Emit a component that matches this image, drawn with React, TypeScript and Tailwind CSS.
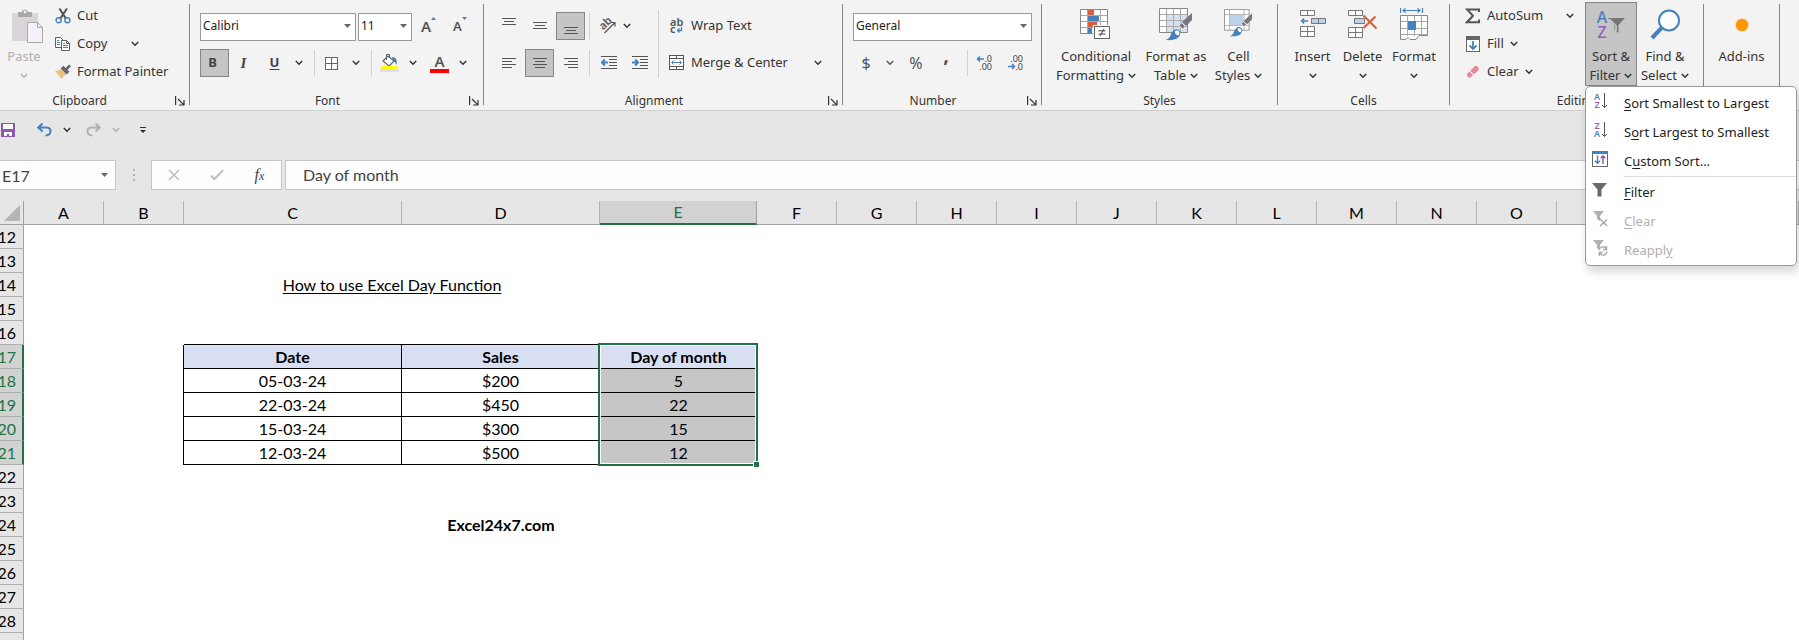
import React, { useState } from 'react';
import clsx from 'clsx';

interface Row {
  date: string;
  sales: string;
  day: string;
}

const COLUMNS = ['A', 'B', 'C', 'D', 'E', 'F', 'G', 'H', 'I', 'J', 'K', 'L', 'M', 'N', 'O', 'P', 'Q', 'R'];
const ROW_NUMBERS = Array.from({ length: 18 }, (_, i) => i + 12);

const TABLE_ROWS: Record<number, Row> = {
  18: { date: '05-03-24', sales: '$200', day: '5' },
  19: { date: '22-03-24', sales: '$450', day: '22' },
  20: { date: '15-03-24', sales: '$300', day: '15' },
  21: { date: '12-03-24', sales: '$500', day: '12' },
};

/* ---------- small shared pieces ---------- */

const Chevron: React.FC<{ className?: string }> = ({ className }) => (
  <svg width="8" height="6" viewBox="0 0 8 6" className={clsx('inline-block shrink-0', className)} fill="none" stroke="currentColor" strokeWidth="1.5">
    <path d="M0.8 1 L4 4.2 L7.2 1" />
  </svg>
);

const ChevronButton: React.FC<{ label: string; className?: string }> = ({ label, className }) => (
  <button aria-label={label} className={clsx('flex h-7 w-4 shrink-0 items-center justify-center', className)}>
    <Chevron />
  </button>
);

const Arrow: React.FC<{ className?: string }> = ({ className }) => (
  <svg width="7" height="4" viewBox="0 0 7 4" className={clsx('pointer-events-none', className)} fill="#666">
    <path d="M0 0H7L3.5 4Z" />
  </svg>
);

const Separator = () => <div className="mt-1 mb-[5px] w-px shrink-0 bg-[#868686]" />;

const Divider: React.FC<{ className?: string }> = ({ className }) => (
  <div className={clsx('w-px shrink-0 bg-[#cfcfcf]', className)} />
);

const Group: React.FC<{ label: string; className: string; launcher?: boolean; labelClass?: string; children: React.ReactNode }> = ({
  label,
  className,
  launcher,
  labelClass,
  children,
}) => (
  <section aria-label={label} className={clsx('flex shrink-0 flex-col pt-0.5', className)}>
    <div className="flex h-[84px]">{children}</div>
    <div className="flex flex-1 items-center pt-1.5 text-xs">
      <span className={clsx('flex-1 text-center', labelClass)}>{label}</span>
      {launcher && (
        <button aria-label={`${label} settings`} className="flex w-[18px] justify-center">
          <svg width="10" height="10" viewBox="0 0 10 10" fill="none" stroke="#333" strokeWidth="1.2">
            <path d="M0.6 0V9M3 3L8.6 8.6M9 4V9H4" />
          </svg>
        </button>
      )}
    </div>
  </section>
);

const ToolButton: React.FC<{ label: string; active?: boolean; children: React.ReactNode }> = ({ label, active, children }) => (
  <button
    aria-label={label}
    aria-pressed={!!active}
    className={clsx(
      'flex h-7 w-[29px] shrink-0 items-center justify-center border',
      active ? 'border-[#868686] bg-[#c5c5c5]' : 'border-transparent'
    )}
  >
    {children}
  </button>
);

const BigButton: React.FC<{ icon: React.ReactNode; lines: string[]; chevron?: boolean; className?: string }> = ({ icon, lines, chevron, className }) => (
  <button className={clsx('flex h-[84px] shrink-0 flex-col items-center text-[13px] leading-[19px]', className)}>
    <span className="flex h-[45px] shrink-0 items-center">{icon}</span>
    <span className="whitespace-nowrap">{lines[0]}</span>
    {chevron && (
      <span className="flex h-[19px] items-center gap-1 whitespace-nowrap">
        {lines[1]}
        <Chevron />
      </span>
    )}
  </button>
);

/* ---------- icons ---------- */

const PasteIcon = () => (
  <svg width="32" height="36" viewBox="0 0 32 36">
    <rect x="0" y="4" width="26" height="28" rx="1" fill="#d9d5d9" />
    <path d="M6 3H10C10 -0.5 16 -0.5 16 3H20V8H6Z" fill="#a9a9a9" />
    <circle cx="13" cy="3" r="1.4" fill="#f3f3f3" />
    <path d="M15.5 13.5H25.5L30.5 18.5V33.5H15.5Z" fill="#f6f1f8" stroke="#a9a9a9" />
    <path d="M25.5 13.5V18.5H30.5" fill="none" stroke="#a9a9a9" />
  </svg>
);

const CutIcon = () => (
  <svg width="16" height="16" viewBox="0 0 16 16" fill="none">
    <path d="M4.4 0.5L10.8 10.4M12 0.5L5.4 10.4" stroke="#555" strokeWidth="2" />
    <circle cx="3.6" cy="12.2" r="2.5" stroke="#4680bd" strokeWidth="1.4" />
    <circle cx="12.4" cy="12.2" r="2.5" stroke="#4680bd" strokeWidth="1.4" />
  </svg>
);

const CopyIcon = () => (
  <svg width="16" height="16" viewBox="0 0 16 16" fill="#fff" stroke="#606060">
    <path d="M0.5 1.5H5.5L8.5 4.5V11.5H0.5Z" />
    <path d="M6.5 4.5H11.5L14.5 7.5V14.5H6.5Z" />
    <path d="M11.5 4.5V7.5H14.5" fill="none" />
    <path d="M2 4.5H4M2 6.5H5M2 8.5H5M8 9.5H13M8 11.5H13M8 7.5H10" stroke="#4680bd" />
  </svg>
);

const PainterIcon = () => (
  <svg width="16" height="16" viewBox="0 0 16 16">
    <path d="M0 7L6.5 5.5L11 10L6.5 15Z" fill="#eac282" />
    <path d="M5.6 4.6L8.4 1.8L10.6 4L14 0.4L16 2.2L12.6 5.8L14.4 7.8L11.6 10.4Z" fill="#666" />
  </svg>
);

const BordersIcon = () => (
  <svg width="13" height="13" viewBox="0 0 13 13" fill="#fff" stroke="#666" shapeRendering="crispEdges">
    <rect x="0.5" y="0.5" width="12" height="12" />
    <path d="M6.5 1V12M1 6.5H12" />
  </svg>
);

const FillColorIcon = () => (
  <svg width="20" height="20" viewBox="0 0 20 20">
    <path d="M9 3L15 8L10 13L4 8Z" fill="#fff" stroke="#666" strokeWidth="1.2" />
    <path d="M7.5 7V1.5H10.5V5" fill="none" stroke="#666" />
    <path d="M13 4C17 4 18.5 7 17.5 12C16.5 9.5 15.5 8.5 13.5 7Z" fill="#4680bd" />
    <rect x="2" y="13" width="16" height="3" fill="#ff0" />
    <rect x="1" y="16" width="19" height="3" fill="#d9dff0" />
  </svg>
);

// Horizontal text lines: every entry is [x1, x2, y]
const Lines: React.FC<{ lines: number[][] }> = ({ lines }) => (
  <svg width="16" height="16" viewBox="0 0 16 16" stroke="#555" shapeRendering="crispEdges">
    {lines.map(([x1, x2, y]) => (
      <path key={y} d={`M${x1} ${y + 0.5}H${x2}`} />
    ))}
  </svg>
);

const IndentIcon: React.FC<{ right?: boolean }> = ({ right }) => (
  <svg width="16" height="16" viewBox="0 0 16 16" fill="none">
    <path d="M0 1.5H16M8 4.5H16M8 7.5H16M8 10.5H16M0 13.5H16" stroke="#555" shapeRendering="crispEdges" />
    {right ? (
      <path d="M0 7.5H5M3.2 4.5L6 7.5L3.2 10.5" stroke="#4680bd" strokeWidth="2" />
    ) : (
      <path d="M7 7.5H2M3.8 4.5L1 7.5L3.8 10.5" stroke="#4680bd" strokeWidth="2" />
    )}
  </svg>
);

const OrientationIcon = () => (
  <svg width="18" height="18" viewBox="0 0 18 18" className="overflow-visible">
    <text x="2" y="12" fontSize="11" fontWeight="600" fill="#555" transform="rotate(-45 5 10)">
      ab
    </text>
    <path d="M5.5 16L15.5 6M12 5.5H16V9.5" fill="none" stroke="#555" strokeWidth="1.2" />
  </svg>
);

const WrapIcon = () => (
  <svg width="16" height="18" viewBox="0 0 16 18" className="overflow-visible">
    <text x="1" y="9" fontSize="11" fontWeight="600" fill="#555">ab</text>
    <text x="1" y="16" fontSize="11" fontWeight="600" fill="#555">c</text>
    <path d="M12.5 10V13.5H8.5M10.5 11.5L8.5 13.5L10.5 15.5" fill="none" stroke="#4680bd" strokeWidth="1.3" />
  </svg>
);

const MergeIcon = () => (
  <svg width="16" height="16" viewBox="0 0 16 16" fill="#fff" stroke="#555">
    <rect x="0.5" y="0.5" width="14" height="14" />
    <path d="M0.5 3.5H14.5M0.5 11.5H14.5M7.5 0.5V3.5M7.5 11.5V14.5" />
    <path d="M3 7.5H12M4.5 5.5L2.5 7.5L4.5 9.5M10.5 5.5L12.5 7.5L10.5 9.5" fill="none" stroke="#4680bd" />
  </svg>
);

const DecimalIcon: React.FC<{ less?: boolean }> = ({ less }) => (
  <svg width="16" height="16" viewBox="0 0 16 16" className="overflow-visible">
    <text x="15" y="7" fontSize="9" fill="#444" textAnchor="end">{less ? '.00' : '.0'}</text>
    <text x="15" y="15" fontSize="9" fill="#444" textAnchor="end">{less ? '.0' : '.00'}</text>
    {less ? (
      <path d="M0 11.5H6M4 9L6.5 11.5L4 14" fill="none" stroke="#4680bd" strokeWidth="1.5" />
    ) : (
      <path d="M7 4H1M3 1.5L0.5 4L3 6.5" fill="none" stroke="#4680bd" strokeWidth="1.5" />
    )}
  </svg>
);

const ConditionalIcon = () => (
  <svg width="32" height="32" viewBox="0 0 32 32">
    <path d="M0.5 0.5H27.5V24.5H0.5Z" fill="#fff" stroke="#888" />
    <path d="M7.5 1V24M20.5 1V24M1 6.5H27M1 12.5H27M1 18.5H27" stroke="#aaa" />
    <rect x="8" y="1" width="6" height="5" fill="#d9603f" />
    <rect x="8" y="7" width="11" height="5" fill="#4680bd" />
    <rect x="8" y="13" width="9" height="5" fill="#d9603f" />
    <rect x="8" y="19" width="4" height="5" fill="#4680bd" />
    <rect x="13" y="16" width="18" height="15" fill="#f3f3f3" />
    <rect x="14.5" y="17.5" width="15" height="12" fill="#fff" stroke="#666" />
    <path d="M18.5 21.8H25.5M18.5 25H25.5M24 20L20 27" stroke="#444" />
  </svg>
);

const Brush = () => (
  <>
    <path d="M33 5L33 12L27 18L23 14Z" fill="#777" />
    <path d="M22.5 14.5L26.5 18.5L23.5 21L20 17.5Z" fill="#777" stroke="#f3f3f3" />
    <path d="M6 32C12 31 11 26 14 23C18 19 23 23 21 27C19 32 12 32.5 6 32Z" fill="#4680bd" />
    <path d="M16 23C19 21.5 21.5 24 20 27C18 28 15.5 26 16 23Z" fill="#fff" />
  </>
);

const FormatTableIcon = () => (
  <svg width="34" height="33" viewBox="0 0 34 33">
    <path d="M0.5 0.5H28.5V24.5H0.5Z" fill="#fff" stroke="#888" />
    <rect x="8" y="7" width="20" height="17" fill="#d3e1ef" />
    <path d="M7.5 1V24M14.5 1V24M21.5 1V24M1 6.5H28M1 12.5H28M1 18.5H28" stroke="#aaa" />
    <Brush />
  </svg>
);

const CellStylesIcon = () => (
  <svg width="29" height="28" viewBox="0 0 34 33" className="mb-1">
    <path d="M0.5 0.5H29.5V25H0.5Z" fill="#fff" stroke="#888" />
    <path d="M6.5 1V25M23.5 1V25M1 6.5H29M1 19.5H29" stroke="#aaa" />
    <rect x="7" y="7" width="16" height="12" fill="#bcd1ea" />
    <Brush />
  </svg>
);

const InsertIcon = () => (
  <svg width="26" height="28" viewBox="0 0 26 28" className="mb-0.5" fill="#fff" stroke="#777">
    <path d="M0.5 0.5H14.5V5.5H0.5ZM7.5 0.5V5.5" />
    <path d="M11.5 8.5H25.5V13.5H11.5ZM18.5 8.5V13.5" fill="#bcd1ea" />
    <path d="M0.5 16.5H14.5V26.5H0.5ZM7.5 16.5V26.5M0.5 21.5H14.5" />
    <path d="M8 11H2M4.2 8.5L1.7 11L4.2 13.5" fill="none" stroke="#4680bd" strokeWidth="1.6" />
  </svg>
);

const DeleteIcon = () => (
  <svg width="29" height="28" viewBox="0 0 29 28" className="mb-0.5" fill="#fff" stroke="#777">
    <path d="M0.5 0.5H14.5V5.5H0.5ZM7.5 0.5V5.5" />
    <path d="M6.5 8.5H16.5V13.5H6.5Z" fill="#bcd1ea" />
    <path d="M0.5 17.5H14.5V27.5H0.5ZM7.5 17.5V27.5M0.5 22.5H14.5" />
    <path d="M15.5 5.5L28.5 18.5M27.5 6.5L15.5 18" stroke="#d9603f" strokeWidth="2.2" />
  </svg>
);

const FormatIcon = () => (
  <svg width="28" height="33" viewBox="0 0 28 33">
    <path d="M0.5 0V5M22.5 0V5M3 2.5H20M5.5 0.5L3 2.5L5.5 4.5M17.5 0.5L20 2.5L17.5 4.5" fill="none" stroke="#4680bd" strokeWidth="1.2" />
    <path d="M0.5 7.5H27.5V27.5H19L16 31.5H10L8 29.5L5 31.5H0.5Z" fill="#fff" stroke="#888" />
    <path d="M7.5 8V28M14.5 8V28M21.5 8V27M1 13.5H27M1 20.5H27M1 26.5H27" stroke="#aaa" />
    <rect x="8" y="13" width="8" height="9" fill="#4680bd" />
  </svg>
);

const SumIcon = () => (
  <svg width="15" height="16" viewBox="0 0 15 16" fill="none" stroke="#555" strokeWidth="2">
    <path d="M14 4V1.5H2L8 7.8L2 14.2H14V11.5" />
  </svg>
);

const FillIcon = () => (
  <svg width="14" height="16" viewBox="0 0 14 16">
    <rect x="0.5" y="0.5" width="13" height="15" fill="#fff" stroke="#666" />
    <rect x="0" y="0" width="14" height="4" fill="#666" />
    <path d="M7 5V13M3.5 9.5L7 13L10.5 9.5" fill="none" stroke="#4680bd" strokeWidth="1.8" />
  </svg>
);

const EraserIcon = () => (
  <svg width="14" height="14" viewBox="0 0 14 14">
    <path d="M8.5 1.5C9.5 0.5 10.5 0.5 11.5 1.5L12.5 3C13 4 13 4.5 12.3 5.3L8 9.5L4.2 5.7Z" fill="#e88a9c" />
    <path d="M3.4 6.6L7 10.2L4.5 12.5H2.5L1 10.8V9Z" fill="#e88a9c" />
  </svg>
);

const SortFilterIcon = () => (
  <svg width="30" height="30" viewBox="0 0 30 30" className="overflow-visible">
    <text x="6" y="13" fontSize="16" fontWeight="500" fill="#4680bd" textAnchor="middle">A</text>
    <text x="6" y="28" fontSize="16" fontWeight="500" fill="#9560b8" textAnchor="middle">Z</text>
    <path d="M12 8H29L22.5 15V23L18.5 20V15Z" fill="#777" />
    <path d="M13.5 9L20 15.5V21" fill="none" stroke="#fff" />
  </svg>
);

const FindIcon = () => (
  <svg width="31" height="32" viewBox="0 0 31 32">
    <path d="M11.5 19L2 29" stroke="#4680bd" strokeWidth="4" />
    <circle cx="19" cy="11.5" r="10" fill="#fdfdfd" stroke="#4680bd" strokeWidth="2" />
  </svg>
);

const SortIcon: React.FC<{ descending?: boolean }> = ({ descending }) => (
  <svg width="16" height="16" viewBox="0 0 16 16" className="overflow-visible">
    <text x="5" y="7" fontSize="9" fontWeight="600" textAnchor="middle" fill={descending ? '#9560b8' : '#4680bd'}>
      {descending ? 'Z' : 'A'}
    </text>
    <text x="5" y="15" fontSize="9" fontWeight="600" textAnchor="middle" fill={descending ? '#4680bd' : '#9560b8'}>
      {descending ? 'A' : 'Z'}
    </text>
    <path d="M12.5 0V14.5M10 12L12.5 14.5L15 12" fill="none" stroke="#555" />
  </svg>
);

const CustomSortIcon = () => (
  <svg width="16" height="16" viewBox="0 0 16 16" fill="none">
    <rect x="0.5" y="0.5" width="15" height="15" fill="#fff" stroke="#666" />
    <rect width="16" height="3" fill="#4680bd" />
    <path d="M5.5 4.5V12M3 9.8L5.5 12.3L8 9.8" stroke="#4680bd" strokeWidth="1.4" />
    <path d="M11 13V5M8.7 7.2L11 4.8L13.3 7.2" stroke="#8d56b2" strokeWidth="1.4" />
  </svg>
);

const FunnelIcon: React.FC<{ variant?: 'clear' | 'reapply' }> = ({ variant }) => (
  <svg width="16" height="16" viewBox="0 0 16 16" fill="none">
    {variant ? (
      <path d="M1 0H12L8 5V10L5 8V5Z" fill="#b0b0b0" />
    ) : (
      <path d="M0 1H15L9.5 7.5V14.5H5.5V7.5Z" fill="#6a6a6a" />
    )}
    {variant === 'clear' && <path d="M7 7L15 15M15 8.5L8 15" stroke="#a9a9a9" strokeWidth="1.5" />}
    {variant === 'reapply' && (
      <path d="M7 10A4 4 0 0 1 14.5 9M14.5 6V9.5H11M15 11.5A4 4 0 0 1 7.5 13M7.3 15.8V12.5H10.8" stroke="#a9a9a9" strokeWidth="1.4" />
    )}
  </svg>
);

/* ---------- ribbon ---------- */

const SortMenuItem: React.FC<{ icon: React.ReactNode; disabled?: boolean; children: React.ReactNode }> = ({ icon, disabled, children }) => (
  <button
    role="menuitem"
    disabled={disabled}
    className="flex h-[29px] w-full items-center gap-4 pl-[6px] text-[13px] text-[#222] hover:bg-[#e6e6e6] disabled:text-[#b0b0b0]"
  >
    <span className="w-4 shrink-0 pb-1.5">{icon}</span>
    <span className="whitespace-nowrap">{children}</span>
  </button>
);

const U: React.FC<{ children: string }> = ({ children }) => <span className="underline underline-offset-2">{children}</span>;

const SortMenu = () => (
  <div
    role="menu"
    className="absolute top-full left-0 z-20 w-[212px] rounded-[5px] border border-[#9a9a9a] bg-white pt-0.5 shadow-[2px_6px_10px_rgba(0,0,0,0.16)]"
  >
    <SortMenuItem icon={<SortIcon />}><U>S</U>ort Smallest to Largest</SortMenuItem>
    <SortMenuItem icon={<SortIcon descending />}>S<U>o</U>rt Largest to Smallest</SortMenuItem>
    <SortMenuItem icon={<CustomSortIcon />}>C<U>u</U>stom Sort...</SortMenuItem>
    <div className="mb-px ml-[38px] h-px bg-[#dedede]" />
    <SortMenuItem icon={<FunnelIcon />}><U>F</U>ilter</SortMenuItem>
    <SortMenuItem icon={<FunnelIcon variant="clear" />} disabled><U>C</U>lear</SortMenuItem>
    <SortMenuItem icon={<FunnelIcon variant="reapply" />} disabled>Reappl<U>y</U></SortMenuItem>
  </div>
);

const Combo: React.FC<{ label: string; options: string[]; className: string }> = ({ label, options, className }) => (
  <div className={clsx('relative h-7 shrink-0', className)}>
    <select aria-label={label} className="h-full w-full appearance-none border border-[#9a9a9a] bg-white pb-0.5 pl-[2px] text-xs text-[#222]">
      {options.map(o => (
        <option key={o}>{o}</option>
      ))}
    </select>
    <Arrow className="absolute top-3 right-[5px]" />
  </div>
);

const Ribbon: React.FC<{ menuOpen: boolean; onToggleMenu: () => void }> = ({ menuOpen, onToggleMenu }) => (
  <header className="flex h-[111px] shrink-0 border-b border-[#cfcfcf] bg-[#f3f3f3] text-[#333]">
    <Group label="Clipboard" className="w-[189px]" launcher labelClass="pr-3">
      <button disabled className="ml-2 flex w-8 flex-col items-center text-[13px] leading-[19px] text-[#b0b0b0]">
        <span className="flex h-[45px] shrink-0 items-center pt-1 pl-2"><PasteIcon /></span>
        <span>Paste</span>
        <span className="flex h-[19px] items-center"><Chevron /></span>
      </button>
      <div className="ml-[15px] flex flex-col text-[13px]">
        <button className="flex h-7 items-center gap-[6px]"><CutIcon />Cut</button>
        <div className="flex h-7 items-center">
          <button className="flex items-center gap-[6px]"><CopyIcon />Copy</button>
          <ChevronButton label="Copy options" className="ml-[20px]" />
        </div>
        <button className="flex h-7 items-center gap-[6px] whitespace-nowrap"><PainterIcon />Format Painter</button>
      </div>
    </Group>
    <Separator />

    <Group label="Font" className="w-[293px]" launcher>
      <div className="flex flex-col gap-[9px] pt-[10px] pl-[10px]">
        <div className="flex items-center">
          <Combo label="Font name" options={['Calibri', 'Arial']} className="w-[156px]" />
          <Combo label="Font size" options={['11', '12', '14']} className="ml-0.5 w-[54px]" />
          <button aria-label="Increase font size" className="ml-[9px] flex w-4 items-start text-[15px] leading-5 font-semibold text-[#555]">
            A
            <svg width="5" height="3" viewBox="0 0 5 3" className="mt-px shrink-0" fill="#4680bd"><path d="M0 3L2.5 0L5 3Z" /></svg>
          </button>
          <button aria-label="Decrease font size" className="ml-4 flex w-4 items-start text-[13px] leading-5 font-semibold text-[#555]">
            A
            <svg width="5" height="3" viewBox="0 0 5 3" className="mt-px shrink-0" fill="#4680bd"><path d="M0 0H5L2.5 3Z" /></svg>
          </button>
        </div>
        <div className="flex items-center">
          <div className="flex gap-0.5 text-[13px] text-[#444]">
            <ToolButton label="Bold" active><b className="pr-1">B</b></ToolButton>
            <ToolButton label="Italic"><i className="pr-1 font-['Liberation_Serif',serif] text-[15px] font-bold">I</i></ToolButton>
            <ToolButton label="Underline"><span className="mr-1 font-bold underline underline-offset-2">U</span></ToolButton>
          </div>
          <ChevronButton label="Underline options" />
          <Divider className="ml-[7px] h-[26px]" />
          <button aria-label="Borders" className="ml-[10px]"><BordersIcon /></button>
          <ChevronButton label="Border options" className="ml-[10px]" />
          <Divider className="ml-[7px] h-[26px]" />
          <button aria-label="Fill color" className="ml-[7px]"><FillColorIcon /></button>
          <ChevronButton label="Fill color options" className="ml-[6px]" />
          <button aria-label="Font color" className="ml-[9px] flex w-[19px] flex-col items-center text-[15px] leading-4 font-semibold text-[#555]">
            A
            <span className="h-1 w-full bg-[#ff0000]" />
          </button>
          <ChevronButton label="Font color options" className="ml-[6px]" />
        </div>
      </div>
    </Group>
    <Separator />

    <Group label="Alignment" className="w-[358px]" launcher>
      <div className="flex flex-col gap-[9px] pt-[10px] pl-[10px]">
        <div className="flex h-7 items-center gap-0.5">
          <ToolButton label="Top align"><Lines lines={[[1, 15, 0], [3, 13, 3], [1, 15, 6]]} /></ToolButton>
          <ToolButton label="Middle align"><Lines lines={[[1, 15, 4], [3, 13, 7], [1, 15, 10]]} /></ToolButton>
          <ToolButton label="Bottom align" active><Lines lines={[[1, 15, 9], [3, 13, 12], [1, 15, 15]]} /></ToolButton>
          <Divider className="mx-0.5 h-[26px]" />
          <button aria-label="Orientation" className="ml-[5px]"><OrientationIcon /></button>
          <ChevronButton label="Orientation options" />
        </div>
        <div className="flex h-7 items-center gap-0.5">
          <ToolButton label="Align left"><Lines lines={[[1, 15, 3], [1, 11, 6], [1, 15, 9], [1, 11, 12]]} /></ToolButton>
          <ToolButton label="Center" active><Lines lines={[[1, 15, 3], [3, 13, 6], [1, 15, 9], [3, 13, 12]]} /></ToolButton>
          <ToolButton label="Align right"><Lines lines={[[1, 15, 3], [5, 15, 6], [1, 15, 9], [5, 15, 12]]} /></ToolButton>
          <Divider className="mx-0.5 h-[26px]" />
          <ToolButton label="Decrease indent"><IndentIcon /></ToolButton>
          <ToolButton label="Increase indent"><IndentIcon right /></ToolButton>
        </div>
      </div>
      <Divider className="mt-2 ml-1 h-[68px]" />
      <div className="flex flex-col gap-[9px] pt-[10px] pl-[10px] text-[13px]">
        <button className="flex h-7 items-center gap-[6px]"><WrapIcon />Wrap Text</button>
        <div className="flex items-center">
          <button className="flex h-7 items-center gap-[6px] whitespace-nowrap"><MergeIcon />Merge &amp; Center</button>
          <ChevronButton label="Merge options" className="ml-[22px]" />
        </div>
      </div>
    </Group>
    <Separator />

    <Group label="Number" className="w-[198px]" launcher>
      <div className="flex flex-col gap-[9px] pt-[10px] pl-[10px]">
        <Combo label="Number format" options={['General', 'Number', 'Currency']} className="w-[179px]" />
        <div className="flex h-7 items-center text-base text-[#555]">
          <button className="w-[26px]" aria-label="Accounting format">$</button>
          <ChevronButton label="Accounting options" className="ml-[3px]" />
          <button className="ml-[10px] w-4" aria-label="Percent style">%</button>
          <button className="ml-[14px] w-4 pb-4 text-xl leading-5 font-bold" aria-label="Comma style">,</button>
          <Divider className="ml-[13px] h-[26px]" />
          <button aria-label="Increase decimal" className="ml-[9px]"><DecimalIcon /></button>
          <button aria-label="Decrease decimal" className="ml-[15px]"><DecimalIcon less /></button>
        </div>
      </div>
    </Group>
    <Separator />

    <Group label="Styles" className="w-[235px]">
      <div className="flex pl-3">
        <BigButton icon={<ConditionalIcon />} lines={['Conditional', 'Formatting']} chevron className="w-[84px]" />
        <BigButton icon={<FormatTableIcon />} lines={['Format as', 'Table']} chevron className="w-[76px]" />
        <BigButton icon={<CellStylesIcon />} lines={['Cell', 'Styles']} chevron className="w-[49px]" />
      </div>
    </Group>
    <Separator />

    <Group label="Cells" className="w-[171px]">
      <div className="flex pl-[10px]">
        <BigButton icon={<InsertIcon />} lines={['Insert', '']} chevron className="w-[49px]" />
        <BigButton icon={<DeleteIcon />} lines={['Delete', '']} chevron className="w-[51px]" />
        <BigButton icon={<FormatIcon />} lines={['Format', '']} chevron className="w-[52px]" />
      </div>
    </Group>
    <Separator />

    <Group label="Editing" className="w-[253px]">
      <div className="flex w-[135px] flex-col pl-[15px] text-[13px]">
        <div className="flex h-7 items-center justify-between pr-[7px]">
          <button className="flex items-center gap-[6px]">
            <span className="w-4"><SumIcon /></span>AutoSum
          </button>
          <ChevronButton label="AutoSum options" />
        </div>
        <button className="flex h-7 items-center gap-[6px]">
          <span className="w-4 pl-px"><FillIcon /></span>Fill<Chevron />
        </button>
        <button className="flex h-7 items-center gap-[6px]">
          <span className="w-4 pl-px"><EraserIcon /></span>Clear<Chevron />
        </button>
      </div>
      <div className="relative">
        <button
          aria-haspopup="menu"
          aria-expanded={menuOpen}
          onClick={onToggleMenu}
          className="flex h-[84px] w-[52px] flex-col items-center border border-[#868686] bg-[#c5c5c5] text-[13px] leading-[19px]"
        >
          <span className="flex h-11 shrink-0 items-center"><SortFilterIcon /></span>
          <span className="whitespace-nowrap">Sort &amp;</span>
          <span className="flex items-center gap-1">Filter<Chevron /></span>
        </button>
        {menuOpen && <SortMenu />}
      </div>
      <BigButton icon={<FindIcon />} lines={['Find &', 'Select']} chevron className="w-14" />
    </Group>
    <Separator />

    <section aria-label="Add-ins" className="w-[75px] shrink-0 pt-0.5">
      <BigButton icon={<span className="h-3 w-3 rounded-full bg-[#ff9500] shadow-[0_0_2px_#ff9500]" />} lines={['Add-ins']} className="w-full" />
    </section>
    <Separator />
  </header>
);

/* ---------- quick access + formula bar ---------- */

const QuickAccess = () => (
  <div className="flex h-[49px] shrink-0 items-center pb-[11px] pl-px text-[#333]">
    <button aria-label="Save">
      <svg width="14" height="14" viewBox="0 0 14 14">
        <path d="M0 0H14V14H0Z" fill="#8d56b2" />
        <path d="M2 1H12V6H2ZM3 9H11V13H8V11H6V13H3Z" fill="#fff" />
      </svg>
    </button>
    <button aria-label="Undo" className="ml-[22px]">
      <svg width="15" height="14" viewBox="0 0 15 14" fill="none" stroke="#4680bd" strokeWidth="2">
        <path d="M1 4.5H9.5C15 5 15 12 8.5 12.5M5.5 0.5L1.3 4.5L5.5 8.5" />
      </svg>
    </button>
    <ChevronButton label="Undo history" className="ml-[7px]" />
    <button aria-label="Redo" disabled className="ml-[11px]">
      <svg width="15" height="14" viewBox="0 0 15 14" fill="none" stroke="#b0b0b0" strokeWidth="2">
        <path d="M14 4.5H5.5C0 5 0 12 6.5 12.5M9.5 0.5L13.7 4.5L9.5 8.5" />
      </svg>
    </button>
    <ChevronButton label="Redo history" className="ml-[7px] text-[#b0b0b0]" />
    <button aria-label="Customize toolbar" className="ml-4">
      <svg width="6" height="6" viewBox="0 0 6 6" fill="#333">
        <path d="M0 0H6V1H0ZM0 3H6L3 6Z" />
      </svg>
    </button>
  </div>
);

const FormulaBar = () => (
  <div className="flex h-[30px] shrink-0 font-[Lato,sans-serif] text-base text-[#444]">
    <div className="relative w-[116px] shrink-0">
      <input aria-label="Name box" defaultValue="E17" className="h-full w-full border border-l-0 border-[#c6c6c6] bg-[#fdfdfd] pl-[2px]" />
      <Arrow className="absolute top-[13px] right-2" />
    </div>
    <div className="flex w-[35px] shrink-0 flex-col items-center justify-center gap-[3px]">
      <span className="h-0.5 w-0.5 bg-[#b0b0b0]" />
      <span className="h-0.5 w-0.5 bg-[#b0b0b0]" />
      <span className="h-0.5 w-0.5 bg-[#b0b0b0]" />
    </div>
    <div className="mr-[3px] grid w-[131px] shrink-0 grid-cols-3 border border-[#c6c6c6] bg-[#fdfdfd]">
      <button aria-label="Cancel" className="flex items-center justify-center">
        <svg width="12" height="12" viewBox="0 0 12 12" stroke="#c0c0c0" strokeWidth="1.6"><path d="M1 1L11 11M11 1L1 11" /></svg>
      </button>
      <button aria-label="Enter" className="flex items-center justify-center">
        <svg width="14" height="12" viewBox="0 0 14 12" fill="none" stroke="#c0c0c0" strokeWidth="2.2"><path d="M1 6.5L4.5 10L13 1.2" /></svg>
      </button>
      <button aria-label="Insert function" className="font-['Liberation_Serif',serif] text-base leading-none italic">
        f<span className="text-xs">x</span>
      </button>
    </div>
    <input aria-label="Formula bar" defaultValue="Day of month" className="min-w-0 flex-1 border border-r-0 border-[#c6c6c6] bg-[#fdfdfd] pl-[17px]" />
  </div>
);

/* ---------- sheet ---------- */

const colWidth = (col: string) => {
  if (col === 'C') return 'w-[218px]';
  if (col === 'D') return 'w-[198px]';
  if (col === 'E') return 'w-[157px]';
  if (col === 'R') return '';
  return 'w-20';
};

// Selection frame with the fill handle, hung on the first selected cell
const Selection = () => (
  <div className="pointer-events-none absolute -top-0.5 -left-0.5 z-10 h-[123px] w-40 border-2 border-[#217346]">
    <div className="h-full w-full border border-white" />
    <div className="absolute -right-1 -bottom-1 h-[7px] w-[7px] border border-white bg-[#217346]" />
  </div>
);

const RowCells: React.FC<{ row: number }> = ({ row }) => {
  const data = TABLE_ROWS[row];
  if (row === 14) {
    return (
      <>
        <td colSpan={2} />
        <td colSpan={2} className="underline underline-offset-2">How to use Excel Day Function</td>
        <td colSpan={14} />
      </>
    );
  }
  if (row === 16) {
    return (
      <>
        <td colSpan={2} />
        <td colSpan={3} className="border-b border-black" />
        <td colSpan={13} />
      </>
    );
  }
  if (row === 17) {
    return (
      <>
        <td />
        <td className="border-r border-black" />
        <th scope="col" className="border-r border-b border-black bg-[#d9dff2]">Date</th>
        <th scope="col" className="border-r border-b border-black bg-[#d9dff2]">Sales</th>
        <th scope="col" className="relative border-b border-black bg-[#d9dff2]">
          Day of month
          <Selection />
        </th>
        <td colSpan={13} />
      </>
    );
  }
  if (data) {
    return (
      <>
        <td />
        <td className="border-r border-black" />
        <td className="border-r border-b border-black">{data.date}</td>
        <td className="border-r border-b border-black">{data.sales}</td>
        <td className="border-b border-black bg-[#c6c6c6]">{data.day}</td>
        <td colSpan={13} />
      </>
    );
  }
  if (row === 24) {
    return (
      <>
        <td colSpan={3} />
        <td className="font-bold">Excel24x7.com</td>
        <td colSpan={14} />
      </>
    );
  }
  return <td colSpan={18} />;
};

const Sheet = () => (
  <main className="min-h-0 flex-1 overflow-hidden bg-white">
    <table className="w-full table-fixed border-separate border-spacing-0 text-center font-[Lato,sans-serif] text-base leading-[22px] text-black">
      <thead>
        <tr className="h-6 bg-[#e6e6e6]">
          <th aria-label="Select all" className="w-6 border-r border-b border-[#a0a0a0] p-0">
            <svg width="16" height="16" viewBox="0 0 16 16" className="ml-1" fill="#b4b4b4"><path d="M16 0V16H0Z" /></svg>
          </th>
          {COLUMNS.map(col => (
            <th
              key={col}
              scope="col"
              className={clsx(
                'border-r p-0 font-normal',
                colWidth(col),
                col === 'E' ? 'border-b-2 border-r-[#a0a0a0] border-b-[#217346] bg-[#d2d2d2] text-[#217346]' : 'border-b border-r-[#b4b4b4] border-b-[#a0a0a0]'
              )}
            >
              {col}
            </th>
          ))}
        </tr>
      </thead>
      <tbody>
        {ROW_NUMBERS.map(row => {
          const selected = row >= 17 && row <= 21;
          return (
            <tr key={row} className="h-6">
              <th
                scope="row"
                className={clsx(
                  'overflow-hidden border-b border-b-[#b0b0b0] p-0 font-normal',
                  selected ? 'border-r-2 border-r-[#217346] bg-[#d2d2d2] text-[#217346]' : 'border-r border-r-[#a0a0a0] bg-[#e6e6e6]'
                )}
              >
                <div className={clsx('flex justify-end', selected ? 'pr-[6px]' : 'pr-[7px]')}>{row}</div>
              </th>
              <RowCells row={row} />
            </tr>
          );
        })}
      </tbody>
    </table>
  </main>
);

const App: React.FC = () => {
  const [menuOpen, setMenuOpen] = useState(true);

  return (
    <div className="flex h-screen flex-col overflow-hidden bg-[#e6e6e6] font-['Noto_Sans',sans-serif]">
      <Ribbon menuOpen={menuOpen} onToggleMenu={() => setMenuOpen(open => !open)} />
      <QuickAccess />
      <FormulaBar />
      <div className="h-[11px] shrink-0" />
      <Sheet />
    </div>
  );
};

export default App;
